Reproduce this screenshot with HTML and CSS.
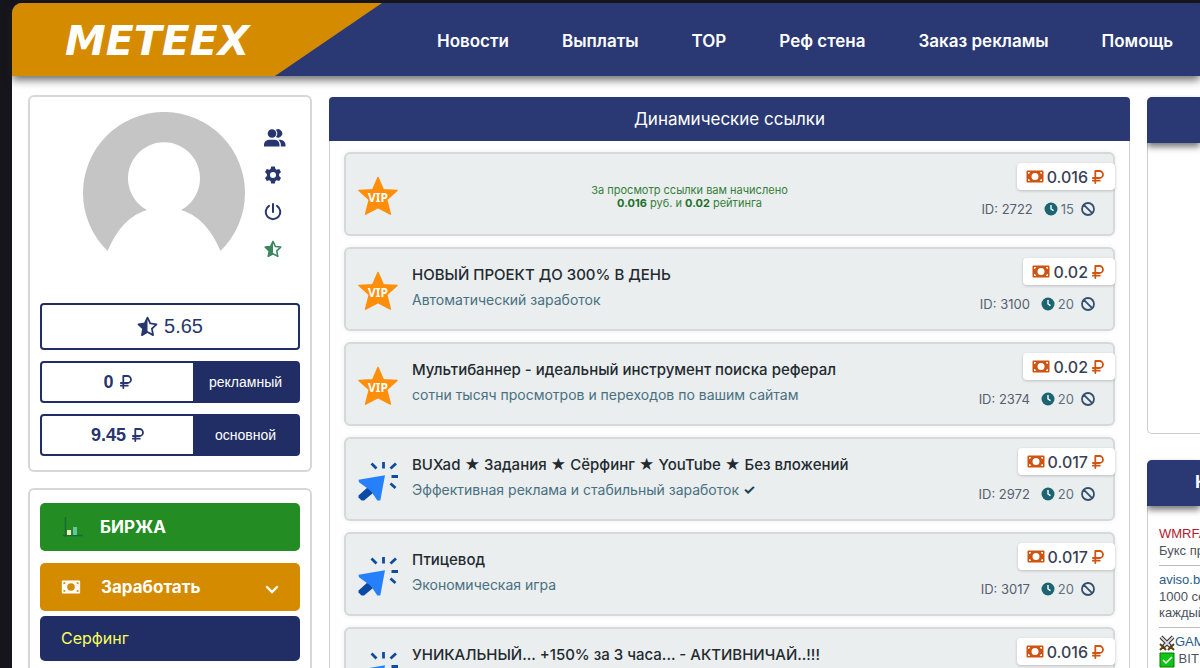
FILE: index.html
```html
<!DOCTYPE html>
<html lang="ru">
<head>
<meta charset="utf-8">
<meta name="viewport" content="width=device-width, initial-scale=1">
<title>METEEX</title>
<link rel="stylesheet" href="styles.css">
</head>
<body>
<svg class="sprite" aria-hidden="true">
  <symbol id="i-users" viewBox="0 0 22 18"><circle cx="8" cy="4.5" r="4.3"/><path d="M11.8.9a4.2 4.2 0 1 1 .2 7.200c1.800-2.100 1.800-5 0-7.200zM0 17.500v-1.700C0 12.500 2.700 10.700 6 10.700h4c3.300 0 5.500 1.800 5.500 5.100v1.700zM14.300 10.700h1.400c3.300 0 5.800 2.200 5.800 5.100v1.700h-4.700v-1.700c0-2.200-1-4-2.500-5.100z"/></symbol>
  <symbol id="i-gear" viewBox="0 0 18 18"><path fill-rule="evenodd" d="M7.200.5h3.600l.6 2.500 1.300.8 2.500-.8 1.800 3.100-1.900 1.800v2.200l1.900 1.800-1.800 3.100-2.500-.8-1.300.8-.6 2.500H7.200L6.600 15l-1.300-.8-2.500.8L1 11.900l1.900-1.800V7.900L1 6.100 2.800 3l2.500.8L6.600 3zM9 6a3 3 0 1 0 0 6 3 3 0 0 0 0-6z"/></symbol>
  <symbol id="i-power" viewBox="0 0 18 18"><path d="M9 1v8M5 2.800a7.300 7.300 0 1 0 8 0" fill="none" stroke="currentColor" stroke-width="2" stroke-linecap="round"/></symbol>
  <symbol id="i-half" viewBox="0 0 20 20"><path d="M10 1.500l2.600 5.600 6 .8-4.400 4.200 1.100 6.100L10 15.300l-5.300 2.900 1.100-6.100L1.400 7.900l6-.8z" fill="none" stroke="currentColor" stroke-width="1.700" stroke-linejoin="round"/><path d="M10 1.500v13.800l-5.300 2.900 1.100-6.100L1.400 7.900l6-.8z"/></symbol>
  <symbol id="i-cash" viewBox="0 0 18 13"><path fill-rule="evenodd" d="M1.500.5h15q1 0 1 1v10q0 1-1 1h-15q-1 0-1-1v-10q0-1 1-1zM9 3a3.500 3.500 0 1 0 0 7 3.500 3.500 0 0 0 0-7zM2 2v2q2 0 2-2zM16 2h-2q0 2 2 2zM2 11h2q0-2-2-2zM16 11V9q-2 0-2 2z"/></symbol>
  <symbol id="i-rub" viewBox="0 0 12 14"><path d="M3.300 13V1H7.500a3.500 3.500 0 0 1 0 7H.8M.8 10.700h7" fill="none" stroke="currentColor" stroke-width="1.800" stroke-linecap="round" stroke-linejoin="round"/></symbol>
  <symbol id="i-clock" viewBox="0 0 14 14"><circle cx="7" cy="7" r="6.500"/><path d="M7 3v4l2.500 1.700" fill="none" stroke="#fff" stroke-width="1.400"/></symbol>
  <symbol id="i-ban" viewBox="0 0 14 14"><path d="M2.600 2.600l8.800 8.800M7 1a6 6 0 1 1 0 12A6 6 0 0 1 7 1z" fill="none" stroke="currentColor" stroke-width="1.800"/></symbol>
  <symbol id="i-star" viewBox="0 0 40 40"><path d="M20 1.500l5.300 12.200 13.700.8-10.300 9.300 3.700 14.300L20 31.700 7.600 38.100l3.700-14.300L1 14.500l13.700-.8z" fill="#ff8f0a" stroke="#ff8f0a" stroke-width="1.500" stroke-linejoin="round"/><text x="20" y="26" class="vip-label">VIP</text></symbol>
  <symbol id="i-click" viewBox="0 0 40 40"><path d="M10 26L.5 34.500v2L3.500 39.500H6L15 32z" fill="#0a4aa5"/><path d="M.5 18.800L27 14.300 22.300 39.500h-3L13 30 1 21.200z" fill="#2680fb"/><path d="M13.500 2.500l5 5M25.500 1v6.500M38 2.500L32.500 7.500M33.500 15.500H40M32.500 22.500l5 4.500" fill="none" stroke="#0f4c9c" stroke-width="2.800"/></symbol>
</svg>

<div class="page">
  <header class="header">
    <a class="logo" href="#">METEEX</a>
    <nav class="nav">
      <a href="#">Новости</a><a href="#">Выплаты</a><a href="#">TOP</a><a href="#">Реф стена</a><a href="#">Заказ рекламы</a><a href="#">Помощь</a>
    </nav>
  </header>

  <div class="columns">
    <aside class="side">
      <section class="card profile">
        <div class="profile-top">
          <svg class="avatar" viewBox="0 -1 162 139" role="img" aria-label="Аватар"><path fill="#c5c5c5" d="M24.500 138A81 81 0 1 1 137.500 138Q123 104 98 97A36 36 0 1 0 64 97Q39 104 24.500 138z"/></svg>
          <nav class="tools">
            <a href="#" aria-label="Рефералы"><svg class="t-users"><use href="#i-users"/></svg></a>
            <a href="#" aria-label="Настройки"><svg><use href="#i-gear"/></svg></a>
            <a href="#" aria-label="Выход"><svg><use href="#i-power"/></svg></a>
            <a href="#" class="green" aria-label="Рейтинг"><svg><use href="#i-half"/></svg></a>
          </nav>
        </div>
        <div class="rating"><svg><use href="#i-half"/></svg>5.65</div>
        <div class="balance"><b>0 <svg><use href="#i-rub"/></svg></b><a href="#">рекламный</a></div>
        <div class="balance"><b>9.45 <svg><use href="#i-rub"/></svg></b><a href="#">основной</a></div>
      </section>

      <nav class="card menu">
        <a class="menu-item exchange" href="#">
          <svg class="chart" viewBox="0 0 22 22"><path d="M3.500 1v20M1 19.500h20" stroke="#176b35" stroke-width="1.500"/><path d="M5 14h4v5H5z" fill="#f5efb8"/><path d="M11 11h4v8h-4z" fill="#64c5a0"/></svg>БИРЖА
        </a>
        <button class="menu-item earn" type="button">
          <svg class="cash"><use href="#i-cash"/></svg>Заработать
          <svg class="chev" viewBox="0 0 14 9"><path d="M2 2l5 5 5-5" fill="none" stroke="currentColor" stroke-width="2.400" stroke-linecap="round"/></svg>
        </button>
        <a class="submenu" href="#">Серфинг</a>
      </nav>
    </aside>

    <main class="panel main">
      <h1 class="bar">Динамические ссылки</h1>
      <div class="list">
        <article class="offer">
          <svg class="mark"><use href="#i-star"/></svg>
          <p class="notice">За просмотр ссылки вам начислено<br><b>0.016</b> руб. и <b>0.02</b> рейтинга</p>
          <div class="info"><span class="price"><svg class="cash"><use href="#i-cash"/></svg>0.016<svg class="rub"><use href="#i-rub"/></svg></span>
          <span class="meta"><span class="id">ID: 2722</span><svg class="clock"><use href="#i-clock"/></svg>15<button type="button" aria-label="Скрыть"><svg><use href="#i-ban"/></svg></button></span></div>
        </article>
        <article class="offer">
          <svg class="mark"><use href="#i-star"/></svg>
          <div class="copy"><a href="#">НОВЫЙ ПРОЕКТ ДО 300% В ДЕНЬ</a><p>Автоматический заработок</p></div>
          <div class="info"><span class="price"><svg class="cash"><use href="#i-cash"/></svg>0.02<svg class="rub"><use href="#i-rub"/></svg></span>
          <span class="meta"><span class="id">ID: 3100</span><svg class="clock"><use href="#i-clock"/></svg>20<button type="button" aria-label="Скрыть"><svg><use href="#i-ban"/></svg></button></span></div>
        </article>
        <article class="offer">
          <svg class="mark"><use href="#i-star"/></svg>
          <div class="copy"><a href="#">Мультибаннер - идеальный инструмент поиска реферал</a><p>сотни тысяч просмотров и переходов по вашим сайтам</p></div>
          <div class="info"><span class="price"><svg class="cash"><use href="#i-cash"/></svg>0.02<svg class="rub"><use href="#i-rub"/></svg></span>
          <span class="meta"><span class="id">ID: 2374</span><svg class="clock"><use href="#i-clock"/></svg>20<button type="button" aria-label="Скрыть"><svg><use href="#i-ban"/></svg></button></span></div>
        </article>
        <article class="offer">
          <svg class="mark"><use href="#i-click"/></svg>
          <div class="copy"><a href="#">BUXad ★ Задания ★ Сёрфинг ★ YouTube ★ Без вложений</a><p>Эффективная реклама и стабильный заработок <span class="tick">✓</span></p></div>
          <div class="info"><span class="price"><svg class="cash"><use href="#i-cash"/></svg>0.017<svg class="rub"><use href="#i-rub"/></svg></span>
          <span class="meta"><span class="id">ID: 2972</span><svg class="clock"><use href="#i-clock"/></svg>20<button type="button" aria-label="Скрыть"><svg><use href="#i-ban"/></svg></button></span></div>
        </article>
        <article class="offer">
          <svg class="mark"><use href="#i-click"/></svg>
          <div class="copy"><a href="#">Птицевод</a><p>Экономическая игра</p></div>
          <div class="info"><span class="price"><svg class="cash"><use href="#i-cash"/></svg>0.017<svg class="rub"><use href="#i-rub"/></svg></span>
          <span class="meta"><span class="id">ID: 3017</span><svg class="clock"><use href="#i-clock"/></svg>20<button type="button" aria-label="Скрыть"><svg><use href="#i-ban"/></svg></button></span></div>
        </article>
        <article class="offer">
          <svg class="mark"><use href="#i-click"/></svg>
          <div class="copy"><a href="#">УНИКАЛЬНЫЙ... +150% за 3 часа... - АКТИВНИЧАЙ..!!!</a></div>
          <div class="info"><span class="price"><svg class="cash"><use href="#i-cash"/></svg>0.016<svg class="rub"><use href="#i-rub"/></svg></span></div>
        </article>
      </div>
    </main>

    <aside class="right">
      <section class="panel promo"><div class="bar"></div></section>
      <section class="panel links">
        <h2 class="bar">К</h2>
        <ul>
          <li><a class="red" href="#">WMRFA</a><p>Букс пр</p></li>
          <li><a href="#">aviso.b</a><p>1000 се<br>каждый</p></li>
          <li><a href="#"><svg viewBox="0 0 16 16"><path d="M2 2l10 10M14 2L4 12" stroke="#333" stroke-width="4"/><path d="M2 2l9 9M14 2l-9 9" stroke="#ddd" stroke-width="1.800"/><path d="M1 9l6 6M15 9l-6 6M1 15l3-3M15 15l-3-3" stroke="#5a4410" stroke-width="2"/></svg>GAM</a><p><svg viewBox="0 0 16 16"><path d="M1 1h14v14H1z" fill="#0fc414" stroke="#08780b"/><path d="M4 8l3 3 6-6" fill="none" stroke="#fff" stroke-width="1.500"/></svg> BIT</p></li>
        </ul>
      </section>
    </aside>
  </div>
</div>
</body>
</html>
```
FILE: styles.css
```css
* { box-sizing: border-box; }
html { background: #15151b; }
body {
  margin: 0;
  padding: 3px 0 0 12px;
  height: 100vh;
  overflow: hidden;
  font-family: Inter, "Noto Sans", sans-serif;
  color: #27366f;
}
a { color: inherit; text-decoration: none; }
h1, h2, p, ul { margin: 0; padding: 0; }
button { margin: 0; padding: 0; border: 0; background: none; font: inherit; color: inherit; cursor: pointer; }
svg { display: block; flex: none; fill: currentColor; }
.sprite { position: absolute; width: 0; height: 0; }
.vip-label { font: 700 12px "Noto Sans", sans-serif; fill: #fff; text-anchor: middle; }

.page { min-height: 100vh; background: #fff; border-radius: 10px 0 0 0; }

.header {
  display: flex;
  height: 73px;
  background: #2a3973;
  border-radius: 10px 0 0 0;
  box-shadow: 0 4px 8px #222a;
  color: #fff;
}
.logo {
  flex: none;
  width: 370px;
  padding-left: 53px;
  border-radius: 10px 0 0 0;
  background: #d58b00;
  clip-path: polygon(0 0, 100% 0, 263px 100%, 0 100%);
  font: italic 700 41px/76px "DejaVu Sans", sans-serif;
}
.nav { display: flex; gap: 53px; padding-left: 55px; font-size: 17px; font-weight: 600; line-height: 76px; white-space: nowrap; }

.columns {
  display: grid;
  grid-template-columns: 284px minmax(0, 1fr) 53px;
  column-gap: 17px;
  padding: 19px 0 0 16px;
}
.side, .right { display: flex; flex-direction: column; gap: 16px; }
.card { border: 2px solid #d7d7d7; border-radius: 6px; padding: 0 10px; background: #fff; }

.profile { height: 377px; }
.profile-top { display: flex; height: 206px; padding: 15px 0 0 43px; }
.avatar { width: 162px; height: 139px; }
.tools { display: flex; flex-direction: column; gap: 19px; padding: 17px 0 0 19px; }
.tools svg { width: 18px; height: 18px; }
.tools .t-users { width: 22px; }
.tools .green { color: #3c8560; }
.rating {
  display: flex; align-items: center; justify-content: center; gap: 6px;
  height: 47px;
  border: 2px solid #212e65; border-radius: 4px;
  font: 20px "Liberation Sans", sans-serif;
}
.rating svg { width: 21px; height: 21px; }
.balance {
  display: flex;
  height: 42px;
  margin-top: 11px;
  border: 2px solid #212e65; border-radius: 4px;
  font-family: "Liberation Sans", sans-serif;
}
.balance b { flex: 1; display: flex; align-items: center; justify-content: center; gap: 6px; font-size: 18px; }
.balance svg { width: 12px; height: 14px; }
.balance a { width: 105px; background: #212e65; color: #fff; font-size: 14px; line-height: 38px; text-align: center; }

.menu { padding-top: 13px; height: 240px; }
.menu-item {
  display: flex; align-items: center;
  width: 100%; height: 48px;
  margin-bottom: 12px;
  border-radius: 5px;
  color: #fff; font-size: 17px; font-weight: 700; text-align: left;
}
.exchange { background: #238d23; }
.exchange .chart { width: 22px; height: 22px; margin: 0 16px 0 22px; }
.earn { background: #d58b00; margin-bottom: 5px; }
.earn .cash { width: 20px; height: 14px; margin: 0 20px 0 21px; }
.chev { width: 14px; height: 9px; margin: 4px 21px 0 auto; }
.submenu {
  display: block;
  height: 45px;
  padding-left: 21px;
  border-radius: 5px;
  background: #212e65;
  color: #faff5c; font-size: 16px; line-height: 44px;
}

.panel { border: 1px solid #cfcfd2; border-radius: 5px; background: #fff; }
.bar { margin: -1px; height: 44px; border-radius: 4px 4px 0 0; background: #2a3973; color: #fff; }
.main { margin-top: 2px; }
.main .bar { font-size: 17px; font-weight: 400; line-height: 45px; text-align: center; }
.list { display: flex; flex-direction: column; gap: 11px; padding: 12px 14px; }
.offer {
  display: flex;
  height: 84px;
  padding-left: 12px;
  border: 2px solid #d5d9da; border-radius: 6px;
  background: #ebeeef;
  box-shadow: 0 0 6px #0001;
}
.mark { width: 40px; height: 40px; margin-top: 22px; }
.notice { flex: 1; padding: 30px 0 0 18px; color: #34803a; font-size: 11px; line-height: 13px; text-align: center; }
.notice b { color: #21702a; }
.copy { flex: 1; padding: 15px 0 0 14px; min-width: 0; white-space: nowrap; }
.copy a { display: block; color: #222a30; font-size: 15px; font-weight: 500; line-height: 22px; }
.copy p { margin-top: 4px; color: #48707f; font-size: 14px; line-height: 20px; }
.tick { color: #123f50; font-weight: 700; }
.info { display: flex; flex-direction: column; align-items: flex-end; width: 150px; padding-top: 9px; }
.price {
  display: flex; align-items: center;
  height: 27px;
  margin-right: -2px;
  padding: 0 11px 0 9px;
  border-radius: 4px;
  background: #fff;
  box-shadow: 0 1px 3px #0003;
  color: #3a3f55; font-size: 16px; font-weight: 500;
}
.price .cash { width: 18px; height: 13px; margin-right: 3px; color: #cf5311; }
.price .rub { width: 12px; height: 14px; margin-left: 4px; color: #cf5311; }
.meta { display: flex; align-items: center; height: 18px; margin: 10px 18px 0 0; color: #5d7180; font-size: 13px; white-space: nowrap; }
.id { margin-right: 11px; color: #565e70; }
.clock { width: 14px; height: 14px; margin-right: 3px; color: #1d6472; }
.meta button { margin-left: 7px; color: #35506f; }
.meta button svg { width: 14px; height: 14px; }

.right { gap: 26px; padding-top: 2px; overflow: hidden; font-family: "Liberation Sans", sans-serif; }
.right .panel { border-right: 0; border-radius: 5px 0 0 5px; }
.right .bar { height: 46px; margin-right: 0; border-radius: 5px 0 0 0; box-shadow: 0 4px 6px #2229; padding-left: 48px; font-size: 18px; font-weight: 700; line-height: 44px; overflow: hidden; }
.promo { height: 337px; }
.links { height: 240px; }
.links ul { list-style: none; padding: 20px 0 0 11px; font-size: 13px; white-space: nowrap; color: #4c5260; }
.links li { line-height: 16px; padding-bottom: 6px; margin-bottom: 5px; border-bottom: 1px solid #bbb; }
.links li a { display: block; line-height: 18px; color: #2a5d88; }
.links li a.red { color: #b3192f; }
.links svg { display: inline-block; width: 16px; height: 16px; vertical-align: middle; }
```
